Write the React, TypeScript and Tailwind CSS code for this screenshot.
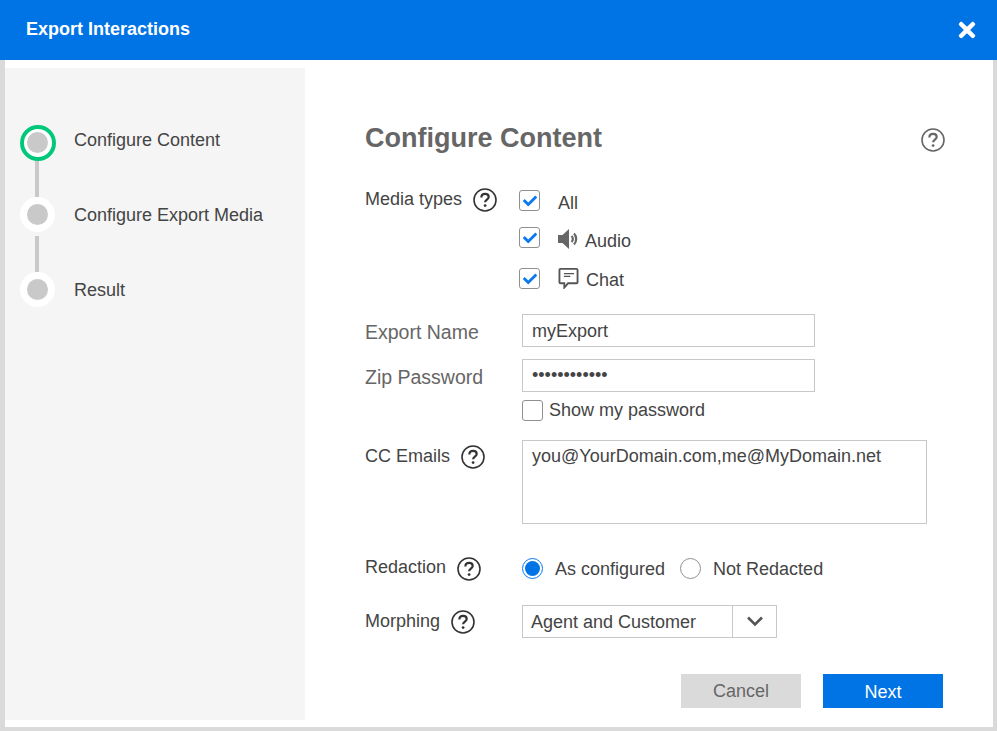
import { FaCheck, FaTimes } from 'react-icons/fa';

const HelpIcon = ({ className = 'text-[#333]' }: { className?: string }) => (
  <svg viewBox="0 0 24 24" className={`h-6 w-6 shrink-0 ${className}`} fill="none" stroke="currentColor">
    <circle cx="12" cy="12" r="11" strokeWidth="1.6" />
    <path d="M8.4 9.4c0-2.2 1.6-3.5 3.7-3.5s3.6 1.3 3.6 3.1c0 2.6-3.6 2.7-3.6 5.3" strokeWidth="2.2" />
    <circle cx="12.1" cy="17.6" r="1.4" fill="currentColor" stroke="none" />
  </svg>
);

const AudioIcon = () => (
  <svg viewBox="0 0 21 20" className="h-5 w-[21px] text-[#666]" fill="none" stroke="currentColor">
    <path d="M0 6h4.500L11 0v20l-6.500-6H0z" fill="currentColor" stroke="none" />
    <path d="M13.500 7a4 4 0 0 1 0 6M16 4.500a8 8 0 0 1 0 11" strokeWidth="2.200" />
  </svg>
);

const ChatIcon = () => (
  <svg viewBox="0 0 22 22.500" className="h-[21px] w-[21px] text-[#555]" fill="none" stroke="currentColor">
    <path d="M2.500 1h17a1.200 1.200 0 0 1 1.200 1.200v13a1.200 1.200 0 0 1-1.200 1.200H10.500l-4 4.600v-4.600h-4a1.200 1.200 0 0 1-1.200-1.200v-13a1.200 1.200 0 0 1 1.200-1.200z" strokeWidth="2" />
    <path d="M6 6h11M6 9h7" strokeWidth="1.500" />
  </svg>
);

const Check = ({ checked = true }: { checked?: boolean }) => (
  <span className="flex h-[21px] w-[21px] shrink-0 items-center justify-center rounded-[3px] border border-[#8f8f8f] bg-white">
    {checked && <FaCheck className="h-[14px] w-[14px] text-[#0a78f0]" />}
  </span>
);

const Radio = ({ checked = false }: { checked?: boolean }) => (
  <span
    className={`flex h-[21px] w-[21px] shrink-0 items-center justify-center rounded-full border bg-white ${
      checked ? 'border-[#0a78f0]' : 'border-[#8f8f8f]'
    }`}
  >
    {checked && <span className="h-[15px] w-[15px] rounded-full bg-[#0074e4]" />}
  </span>
);

function Step({ label, active, last }: { label: string; active?: boolean; last?: boolean }) {
  return (
    <div className={`flex ${active ? 'h-[72px]' : last ? '' : 'h-[75px]'}`}>
      <div className="flex w-[35px] flex-col">
        <div
          className={`shrink-0 rounded-full bg-white ${
            active ? 'h-[36px] w-[36px] border-[4px] border-[#00c87a] p-[3px]' : 'h-[35px] w-[35px] p-[7px]'
          }`}
        >
          <div className="h-[21px] w-[21px] rounded-full bg-[#c9c9c9]" />
        </div>
        {!last && <div className={`ml-[15px] w-[4px] grow bg-[#c9c9c9] ${active ? '' : 'mt-1'}`} />}
      </div>
      <span className={`ml-[19px] text-[18px] leading-[30px] text-[#444] ${active ? '' : 'mt-[3px]'}`}>{label}</span>
    </div>
  );
}

const textInput =
  'h-[33px] w-[293px] border border-[#c8c8c8] bg-white px-[9px] text-[18px] text-[#444] outline-none';

export default function App() {
  return (
    <div className="flex h-[731px] w-[997px] flex-col overflow-hidden bg-[#dadada] pb-1 pr-1 pl-[5px] font-['Liberation_Sans',Arial,sans-serif]">
      <header className="-ml-[5px] -mr-1 flex h-[60px] shrink-0 items-center justify-between bg-[#0074e4] pb-px pl-[26px] pr-[18px]">
        <h1 className="text-[18px] font-bold text-white">Export Interactions</h1>
        <FaTimes className="h-6 w-6 text-white" />
      </header>

      <div className="flex min-h-0 grow bg-white pb-[7px] pt-2">
        <aside className="h-full w-[300px] shrink-0 bg-[#f5f5f5] pl-[15px] pt-[57px]">
          <Step label="Configure Content" active />
          <Step label="Configure Export Media" />
          <Step label="Result" last />
        </aside>

        <main className="flex grow flex-col pl-[60px] pr-[48px]">
          <div className="mt-[52px] flex h-[36px] items-center justify-between">
            <h2 className="text-[27px] font-bold text-[#666]">Configure Content</h2>
            <span className="mt-1"><HelpIcon className="text-[#666]" /></span>
          </div>

          <div className="mt-[32px] flex">
            <div className="flex w-[154px] items-start">
              <span className="-mt-px text-[18px] leading-[24px] text-[#444]">Media types</span>
              <span className="ml-[11px]"><HelpIcon /></span>
            </div>
            <div className="flex flex-col text-[18px] leading-[27px] text-[#444]">
              <div className="flex h-[39px] items-start pt-[2px]">
                <Check />
                <span className="ml-[18px]">All</span>
              </div>
              <div className="flex h-[41px] items-start">
                <Check />
                <span className="ml-[18px] mt-[2px]"><AudioIcon /></span>
                <span className="ml-[6px] mt-[1px]">Audio</span>
              </div>
              <div className="flex h-[33px] items-start">
                <Check />
                <span className="ml-[18px]"><ChatIcon /></span>
                <span className="ml-[7px] -mt-px">Chat</span>
              </div>
            </div>
          </div>

          <div className="mt-[13px] flex items-center">
            <label className="w-[157px] pt-[4px] text-[19.5px] text-[#666]">Export Name</label>
            <input className={`${textInput} pt-[2px]`} readOnly value="myExport" />
          </div>

          <div className="mt-3 flex items-center">
            <label className="w-[157px] pt-[4px] text-[19.5px] text-[#666]">Zip Password</label>
            <input className={textInput} readOnly type="password" value="myExportPass" />
          </div>

          <div className="ml-[157px] mt-[7px] flex h-[21px] items-center text-[18px] text-[#444]">
            <Check checked={false} />
            <span className="ml-[6px]">Show my password</span>
          </div>

          <div className="mt-[19px] flex">
            <div className="flex w-[157px] items-start pt-[3px]">
              <span className="pt-px text-[18px] leading-[24px] text-[#444]">CC Emails</span>
              <span className="ml-[11px] mt-[2px]"><HelpIcon /></span>
            </div>
            <textarea
              readOnly
              value="you@YourDomain.com,me@MyDomain.net"
              className="h-[84px] w-[405px] resize-none border border-[#c8c8c8] px-[9px] pb-[3px] pt-[2px] text-[18px] text-[#444] outline-none"
            />
          </div>

          <div className="mt-[33px] flex h-[24px] items-center">
            <div className="flex w-[157px] items-center">
              <span className="pb-[2px] text-[18px] text-[#444]">Redaction</span>
              <span className="ml-[11px]"><HelpIcon /></span>
            </div>
            <div className="flex items-center text-[18px] text-[#444]">
              <Radio checked />
              <span className="ml-[12px] pt-[2px]">As configured</span>
              <span className="ml-[15px]"><Radio /></span>
              <span className="ml-[12px] pt-[2px]">Not Redacted</span>
            </div>
          </div>

          <div className="mt-[24px] flex items-center">
            <div className="flex w-[157px] items-center">
              <span className="text-[18px] text-[#444]">Morphing</span>
              <span className="ml-[11px] mt-[2px]"><HelpIcon /></span>
            </div>
            <div className="flex h-[33px] w-[255px] items-center border border-[#c8c8c8] text-[18px] text-[#444]">
              <span className="h-[31px] w-[210px] border-r border-[#c8c8c8] pl-2 pt-px leading-[31px]">Agent and Customer</span>
              <svg viewBox="0 0 18 12" className="ml-[13px] h-3 w-[18px] text-[#555]" fill="none" stroke="currentColor">
                <path d="M2 2.500l7 7 7-7" strokeWidth="2.600" />
              </svg>
            </div>
          </div>

          <div className="ml-[316px] mt-9 flex gap-[22px] text-[18px]">
            <button className="h-[34px] w-[120px] bg-[#dadada] pt-[2px] text-[#666]">Cancel</button>
            <button className="h-[34px] w-[120px] bg-[#0074e4] pt-[3px] font-medium text-white">Next</button>
          </div>
        </main>
      </div>
    </div>
  );
}
